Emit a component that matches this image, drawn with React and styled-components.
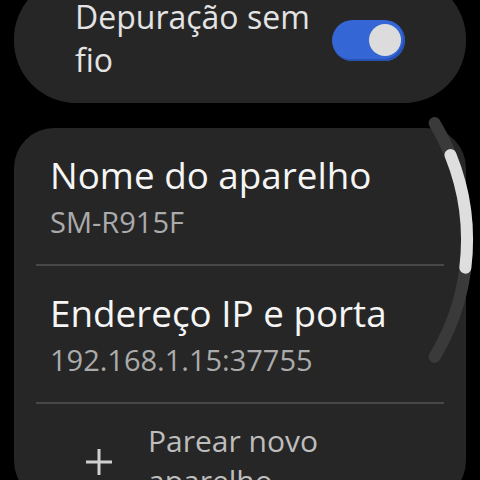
import React from "react";
import styled, { createGlobalStyle } from "styled-components";

const Global = createGlobalStyle`
  html, body {
    margin: 0;
    padding: 0;
    background: #000;
    overflow: hidden;
  }
  body {
    font-family: "Open Sans", "Roboto", sans-serif;
  }
`;

const Screen = styled.div`
  position: relative;
  width: 480px;
  height: 480px;
  overflow: hidden;
  background: #000;
`;

const List = styled.div`
  display: flex;
  flex-direction: column;
  gap: 25px;
  padding: 0 14px;
  margin-top: -23px;
`;

const ToggleChip = styled.div`
  height: 126px;
  border-radius: 62px;
  background: #262626;
  display: flex;
  align-items: center;
  justify-content: space-between;
  padding: 0 61px 0 61px;
  box-sizing: border-box;
`;

const ChipLabel = styled.div`
  font-size: 32px;
  line-height: 43px;
  color: #e3e3e3;
  margin-top: -5px;
  width: 250px;
`;

const Track = styled.div`
  width: 73px;
  height: 41px;
  border-radius: 21px;
  background: #3467d5;
  box-shadow: inset -2px -2px 0 #2853b4;
  display: flex;
  align-items: center;
  justify-content: flex-end;
  padding-right: 4px;
  box-sizing: border-box;
`;

const Thumb = styled.div`
  width: 32px;
  height: 32px;
  border-radius: 50%;
  background: #dcdcdc;
`;

const Card = styled.div`
  background: #262626;
  border-radius: 40px;
  display: flex;
  flex-direction: column;
`;

const Row = styled.div`
  padding: 25px 34px 17px 36px;
  display: flex;
  flex-direction: column;
`;

const Title = styled.div`
  font-size: 36.8px;
  line-height: 44px;
  color: #f5f5f5;
  white-space: nowrap;
`;

const Subtitle = styled.div`
  font-size: 29px;
  line-height: 50px;
  color: #ababab;
  white-space: nowrap;
`;

const Divider = styled.div`
  height: 2px;
  margin: 0 22px;
  background: #484848;
`;

const ActionRow = styled.div`
  display: flex;
  align-items: center;
  gap: 35px;
  padding: 17px 34px 0 71px;
`;

const ActionText = styled.div`
  font-size: 30px;
  line-height: 40px;
  color: #bdbdbd;
`;

const PlusIcon = styled.svg`
  width: 28px;
  height: 28px;
  flex: none;
  margin-top: 2px;
`;

const ScrollArc = styled.svg`
  position: absolute;
  inset: 0;
  pointer-events: none;
`;

function arcPoint(deg, r = 227, cx = 240, cy = 240) {
  const a = (deg * Math.PI) / 180;
  return [cx + r * Math.cos(a), cy + r * Math.sin(a)];
}

function arcPath(from, to) {
  const [x1, y1] = arcPoint(from);
  const [x2, y2] = arcPoint(to);
  return `M ${x1.toFixed(2)} ${y1.toFixed(2)} A 227 227 0 0 1 ${x2.toFixed(2)} ${y2.toFixed(2)}`;
}

export default function App() {
  return (
    <>
      <Global />
      <Screen>
        <List>
          <ToggleChip>
            <ChipLabel>Depuração sem fio</ChipLabel>
            <Track>
              <Thumb />
            </Track>
          </ToggleChip>
          <Card>
            <Row>
              <Title>Nome do aparelho</Title>
              <Subtitle>SM-R915F</Subtitle>
            </Row>
            <Divider />
            <Row>
              <Title>Endereço IP e porta</Title>
              <Subtitle>192.168.1.15:37755</Subtitle>
            </Row>
            <Divider />
            <ActionRow>
              <PlusIcon viewBox="0 0 28 28">
                <path d="M14 1 V27 M1 14 H27" stroke="#cfcfcf" strokeWidth="3" fill="none" />
              </PlusIcon>
              <ActionText>Parear novo aparelho</ActionText>
            </ActionRow>
          </Card>
        </List>
        <ScrollArc width="480" height="480" viewBox="0 0 480 480">
          <path d={arcPath(-31, 31)} stroke="#3a3a3a" strokeWidth="12" strokeLinecap="round" fill="none" />
          <path d={arcPath(-22, 7)} stroke="#dedede" strokeWidth="12" strokeLinecap="round" fill="none" />
        </ScrollArc>
      </Screen>
    </>
  );
}
